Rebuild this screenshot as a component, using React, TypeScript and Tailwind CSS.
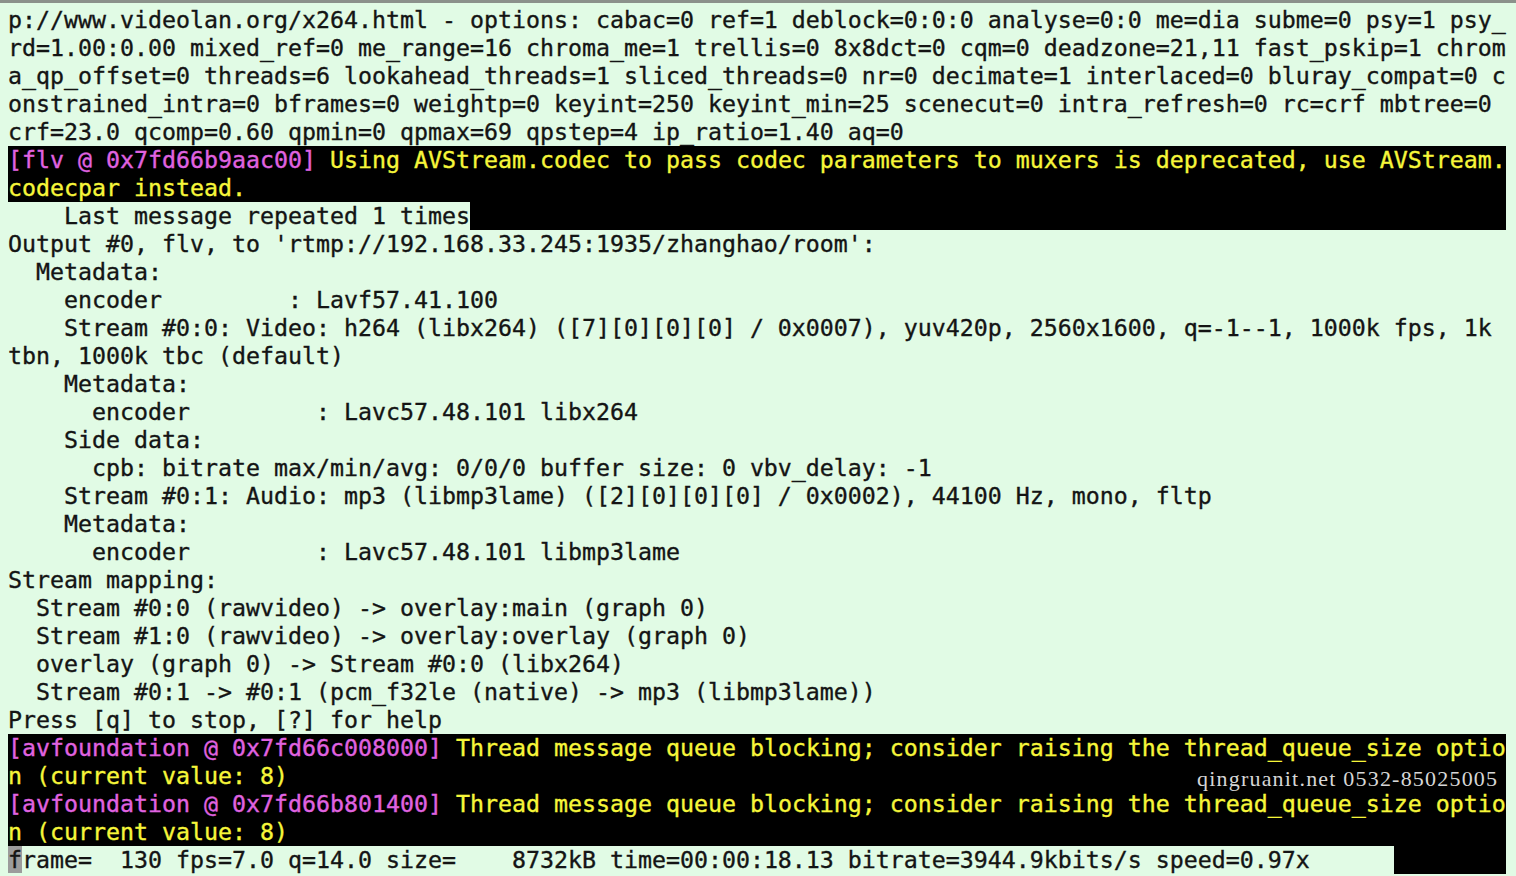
import React from "react";

type Seg = { t: string; c?: "m" | "y" };
type Row = { segs: Seg[]; dark?: boolean; tail?: boolean };

const plain = (t: string): Row => ({ segs: [{ t }] });

const ROWS: Row[] = [
  plain("p://www.videolan.org/x264.html - options: cabac=0 ref=1 deblock=0:0:0 analyse=0:0 me=dia subme=0 psy=1 psy_"),
  plain("rd=1.00:0.00 mixed_ref=0 me_range=16 chroma_me=1 trellis=0 8x8dct=0 cqm=0 deadzone=21,11 fast_pskip=1 chrom"),
  plain("a_qp_offset=0 threads=6 lookahead_threads=1 sliced_threads=0 nr=0 decimate=1 interlaced=0 bluray_compat=0 c"),
  plain("onstrained_intra=0 bframes=0 weightp=0 keyint=250 keyint_min=25 scenecut=0 intra_refresh=0 rc=crf mbtree=0"),
  plain("crf=23.0 qcomp=0.60 qpmin=0 qpmax=69 qpstep=4 ip_ratio=1.40 aq=0"),
  {
    dark: true,
    segs: [
      { t: "[flv @ 0x7fd66b9aac00]", c: "m" },
      { t: " Using AVStream.codec to pass codec parameters to muxers is deprecated, use AVStream.", c: "y" },
    ],
  },
  { dark: true, segs: [{ t: "codecpar instead.", c: "y" }] },
  { tail: true, segs: [{ t: "    Last message repeated 1 times" }] },
  plain("Output #0, flv, to 'rtmp://192.168.33.245:1935/zhanghao/room':"),
  plain("  Metadata:"),
  plain("    encoder         : Lavf57.41.100"),
  plain("    Stream #0:0: Video: h264 (libx264) ([7][0][0][0] / 0x0007), yuv420p, 2560x1600, q=-1--1, 1000k fps, 1k"),
  plain("tbn, 1000k tbc (default)"),
  plain("    Metadata:"),
  plain("      encoder         : Lavc57.48.101 libx264"),
  plain("    Side data:"),
  plain("      cpb: bitrate max/min/avg: 0/0/0 buffer size: 0 vbv_delay: -1"),
  plain("    Stream #0:1: Audio: mp3 (libmp3lame) ([2][0][0][0] / 0x0002), 44100 Hz, mono, fltp"),
  plain("    Metadata:"),
  plain("      encoder         : Lavc57.48.101 libmp3lame"),
  plain("Stream mapping:"),
  plain("  Stream #0:0 (rawvideo) -> overlay:main (graph 0)"),
  plain("  Stream #1:0 (rawvideo) -> overlay:overlay (graph 0)"),
  plain("  overlay (graph 0) -> Stream #0:0 (libx264)"),
  plain("  Stream #0:1 -> #0:1 (pcm_f32le (native) -> mp3 (libmp3lame))"),
  plain("Press [q] to stop, [?] for help"),
  {
    dark: true,
    segs: [
      { t: "[avfoundation @ 0x7fd66c008000]", c: "m" },
      { t: " Thread message queue blocking; consider raising the thread_queue_size optio", c: "y" },
    ],
  },
  { dark: true, segs: [{ t: "n (current value: 8)", c: "y" }] },
  {
    dark: true,
    segs: [
      { t: "[avfoundation @ 0x7fd66b801400]", c: "m" },
      { t: " Thread message queue blocking; consider raising the thread_queue_size optio", c: "y" },
    ],
  },
  { dark: true, segs: [{ t: "n (current value: 8)", c: "y" }] },
];

// first char "f" sits under the cursor block
const STATUS = "rame=  130 fps=7.0 q=14.0 size=    8732kB time=00:00:18.13 bitrate=3944.9kbits/s speed=0.97x";

function Line({ row }: { row: Row }) {
  return (
    <div className={`flex h-[28px] w-[1498px] items-center ${row.dark ? "bg-black" : ""}`}>
      <span className="whitespace-pre">
        {row.segs.map((s, i) => (
          <span
            key={i}
            className={s.c === "m" ? "text-[#e063e0]" : s.c === "y" ? "text-[#f6f63a]" : "text-[#141414]"}
          >
            {s.t}
          </span>
        ))}
      </span>
      {row.tail && <div className="h-full flex-1 bg-black" />}
    </div>
  );
}

export default function App() {
  return (
    <div className="relative h-[876px] w-[1516px] overflow-hidden bg-[#e1fbe5] font-['DejaVu_Sans_Mono',monospace] text-[23.25px] leading-[28px] [-webkit-text-stroke:0.35px]">
      <div className="h-[3px] bg-[#8b918b]" />
      <div className="flex flex-col pt-[3px] pl-[8px]">
        {ROWS.map((r, i) => (
          <Line key={i} row={r} />
        ))}
        {/* status line with cursor */}
        <div className="flex h-[28px] w-[1498px] items-center">
          <span className="whitespace-pre text-[#141414]">
            <span className="bg-[#9c9c9c]">f</span>
            {STATUS}
          </span>
          <div className="ml-auto h-full w-[112px] bg-black" />
        </div>
      </div>

      {/* watermark */}
      <div className="absolute left-[1197px] top-[765px] whitespace-nowrap font-['Liberation_Serif',serif] text-[22px] tracking-[1.2px] text-[#d6d6d6] [-webkit-text-stroke:0px]">
        qingruanit.net 0532-85025005
      </div>
    </div>
  );
}
